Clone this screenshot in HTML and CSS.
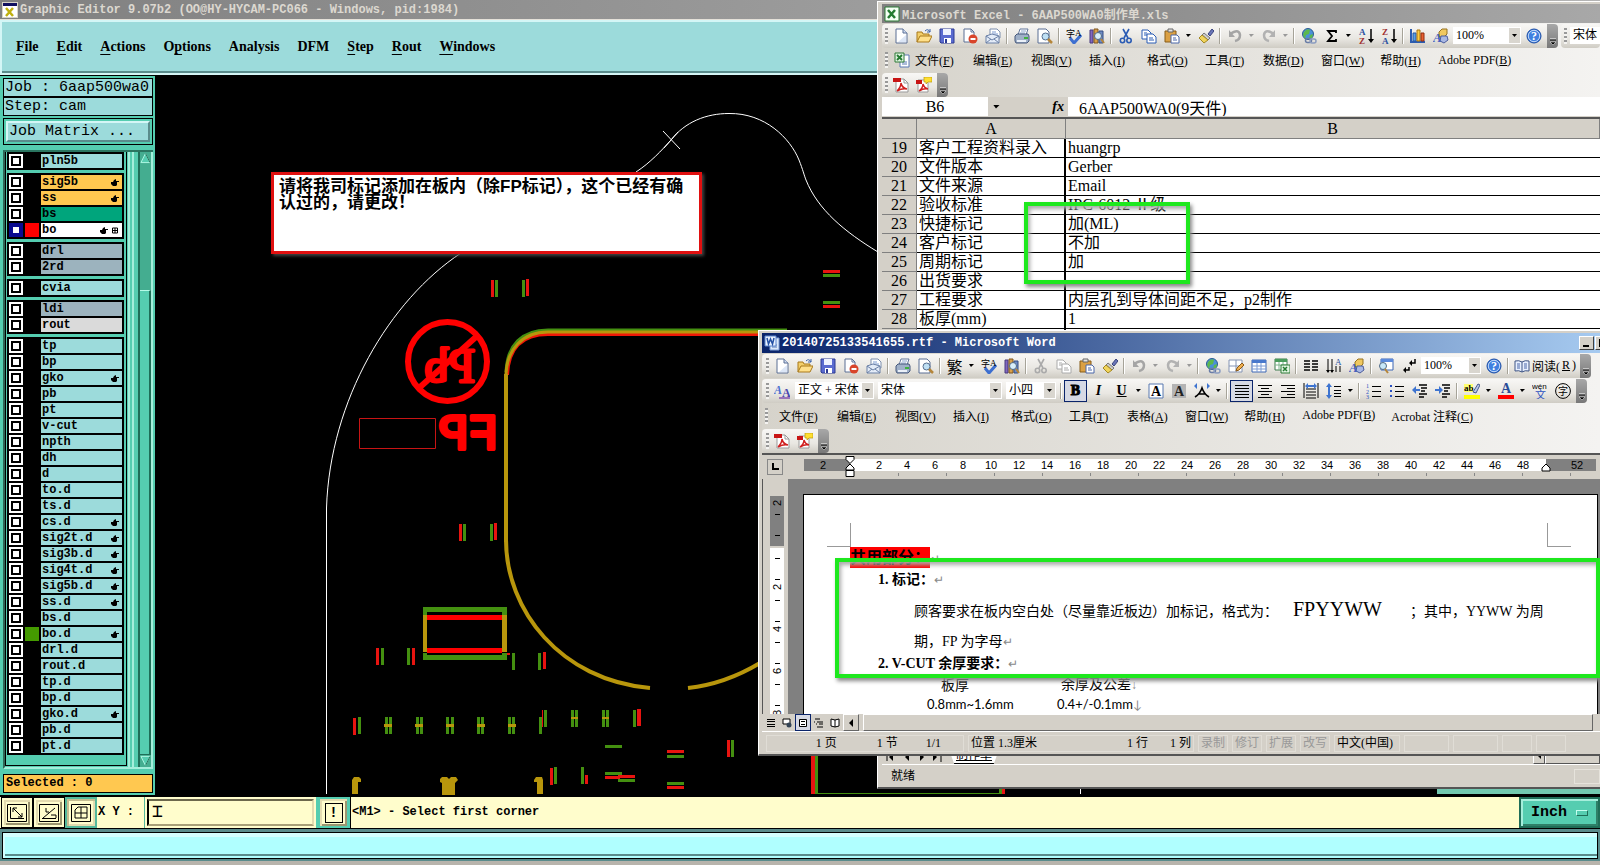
FILE: index.html
```
<!DOCTYPE html>
<html lang="zh-CN">
<head>
    <meta charset="utf-8">
    <title>Graphic Editor</title>
    <link rel="stylesheet" href="styles.css">
</head>
<body>
    <!-- icon sheet -->
    <svg class="sheet" aria-hidden="true">
        <symbol id="new" viewBox="0 0 16 16"><path d="M3 1h7l4 4v10H3z" fill="#fff" stroke="#5a6f94"/><path d="M10 1v4h4" fill="#cfdcf2" stroke="#5a6f94"/><path d="M5 14l8-7v7z" fill="#dce6f6"/></symbol>
        <symbol id="open" viewBox="0 0 16 16"><path d="M1 14V4h5l1 2h6v3" fill="#f3cf6a" stroke="#a8791b"/><path d="M1 14L4 8h12l-3 6z" fill="#ffe08a" stroke="#a8791b"/><path d="M9 3q3-3 5 1m0-3v3h-3" fill="none" stroke="#3b62a8"/></symbol>
        <symbol id="save" viewBox="0 0 16 16"><path d="M1 1h14v14H2l-1-1z" fill="#5a6bd0" stroke="#2c3a92"/><path d="M4 1h8v6H4z" fill="#eef2ff"/><path d="M5 10h7v5H5z" fill="#fff"/><path d="M6 11h2v4H6z" fill="#2c3a92"/></symbol>
        <symbol id="perm" viewBox="0 0 16 16"><path d="M2 1h7l3 3v10H2z" fill="#fff" stroke="#5a6f94"/><path d="M9 1v3h3" fill="none" stroke="#5a6f94"/><circle cx="11" cy="11" r="4.500" fill="#d8442a"/><path d="M8.500 11h5" stroke="#fff" stroke-width="2"/></symbol>
        <symbol id="mail" viewBox="0 0 16 16"><path d="M5 1h7l3 3v6H5z" fill="#fff" stroke="#7d8fae"/><path d="M7 4h4M7 6h6" stroke="#7d9bd0"/><path d="M1 8l6-2 7 2v7H1z" fill="#e4ecf8" stroke="#6a80a6"/><path d="M1 8l6 4 7-4M1 15l5-4m8 4l-5-4" fill="none" stroke="#6a80a6"/></symbol>
        <symbol id="print" viewBox="0 0 16 16"><path d="M4 7l2-6h8l-2 6z" fill="#fff" stroke="#64789c"/><path d="M7 3h5M6 5h5" stroke="#8aa3cc"/><path d="M1 8l2-2h11l1 2v5l-2 2H2l-1-2z" fill="#9fb0c8" stroke="#44577a"/><path d="M3 12h9v2H3z" fill="#eaf0f8"/><path d="M10 9h4v2h-4z" fill="#3fb23f"/></symbol>
        <symbol id="preview" viewBox="0 0 16 16"><path d="M1 1h8l3 3v11H1z" fill="#fff" stroke="#5a6f94"/><circle cx="8.500" cy="8.500" r="3.500" fill="#bfe0f4" stroke="#587090"/><path d="M11 11l4 4" stroke="#b5863a" stroke-width="2.500"/></symbol>
        <symbol id="check" viewBox="0 0 16 16"><path d="M4 10l4 5 7-8" fill="none" stroke="#3d6fd0" stroke-width="3"/><text x="0" y="9" font-size="9">字</text><text x="9" y="8" font-size="9">A</text></symbol>
        <symbol id="research" viewBox="0 0 16 16"><path d="M1 2h3v13H1z" fill="#8268c0" stroke="#46387c"/><path d="M5 1h4v14H5z" fill="#d9a04a" stroke="#7c5520"/><path d="M10 3h4v12h-4z" fill="#6d8cc8" stroke="#344c80"/><circle cx="9" cy="8" r="3.500" fill="#d8eefa" stroke="#506884"/><path d="M12 11l3 4" stroke="#b5863a" stroke-width="2"/></symbol>
        <symbol id="cut" viewBox="0 0 16 16"><path d="M5 1l5 9M11 1L6 10" stroke="currentColor" stroke-width="1.600"/><circle cx="4.500" cy="12.500" r="2.200" fill="none" stroke="currentColor" stroke-width="1.600"/><circle cx="11" cy="12.500" r="2.200" fill="none" stroke="currentColor" stroke-width="1.600"/></symbol>
        <symbol id="copy" viewBox="0 0 16 16"><path d="M1 2h6l3 3v6H1z" fill="#fff" stroke="currentColor"/><path d="M6 6h6l3 3v6H6z" fill="#fff" stroke="currentColor"/><path d="M3 5h3M3 7h3m2 3h4m-4 2h5" stroke="currentColor"/></symbol>
        <symbol id="paste" viewBox="0 0 16 16"><path d="M1 3h11v11H1z" fill="#dba043" stroke="#875c18"/><path d="M4 1h5v3H4z" fill="#e4e4e4" stroke="#666"/><path d="M7 7h6l2 2v6H7z" fill="#fff" stroke="#4a66a8"/><path d="M9 10h3m-3 2h4" stroke="#4a66a8"/></symbol>
        <symbol id="brush" viewBox="0 0 16 16"><path d="M10 6l4-5 2 2-4 5z" fill="#6a76b8" stroke="#3b457e"/><path d="M6 5l6 5-2 2-6-5z" fill="#ccc" stroke="#777"/><path d="M4 7l6 5-4 3-5-5z" fill="#f0d45c" stroke="#a38722"/></symbol>
        <symbol id="undo" viewBox="0 0 16 16"><path d="M3 6q9-6 10 1 0 5-5 6" fill="none" stroke="#a5a5a5" stroke-width="2.500"/><path d="M2 2v7h6z" fill="#a5a5a5"/></symbol>
        <symbol id="redo" viewBox="0 0 16 16"><path d="M13 6Q4 0 3 7q0 5 5 6" fill="none" stroke="#b2b2b2" stroke-width="2.500"/><path d="M14 2v7H8z" fill="#b2b2b2"/></symbol>
        <symbol id="globe" viewBox="0 0 16 16"><circle cx="7" cy="6" r="5.500" fill="#4a90d8" stroke="#2a5a94"/><path d="M3 4q3-4 6-2l-1 4-3 1-1 4-2-4zM9 7l3-1-1 4-3 1z" fill="#5cb84c"/><rect x="4.500" y="10.500" width="6" height="4" rx="2" fill="none" stroke="#6a7da6" stroke-width="1.500"/><rect x="9" y="11" width="6" height="4" rx="2" fill="none" stroke="#8a9cc0" stroke-width="1.500"/></symbol>
        <symbol id="sigma" viewBox="0 0 16 16"><path d="M12 5V3H4l4 5-4 5h8v-2" fill="none" stroke="#000" stroke-width="1.800"/></symbol>
        <symbol id="sorta" viewBox="0 0 16 16"><text x="1" y="7" font-size="9" font-weight="bold" fill="#2a50a0">A</text><text x="1" y="16" font-size="9" font-weight="bold" fill="#a03030">Z</text><path d="M13 1v12" stroke="#000" stroke-width="1.500"/><path d="M10 11h6l-3 4z"/></symbol>
        <symbol id="sortz" viewBox="0 0 16 16"><text x="1" y="7" font-size="9" font-weight="bold" fill="#a03030">Z</text><text x="1" y="16" font-size="9" font-weight="bold" fill="#2a50a0">A</text><path d="M13 1v12" stroke="#000" stroke-width="1.500"/><path d="M10 11h6l-3 4z"/></symbol>
        <symbol id="chart" viewBox="0 0 16 16"><path d="M1 1v13h14" fill="none" stroke="#2c5cb0" stroke-width="2"/><path d="M3 5h3v8H3z" fill="#59a0e8" stroke="#2858a0"/><path d="M7 2h3v11H7z" fill="#ffcc40" stroke="#a87410"/><path d="M11 5h3v8h-3z" fill="#e86030" stroke="#902c10"/></symbol>
        <symbol id="draw" viewBox="0 0 16 16"><path d="M6 4l3-3h5v5l-3 3H6z" fill="#f0c860" stroke="#967220"/><path d="M8 8h6l1 4-4 3-4-2z" fill="#a9b8e4" stroke="#4b5c9c"/><text x="0" y="14" font-size="13" font-weight="bold" font-style="italic" fill="#4660c0">A</text></symbol>
        <symbol id="help" viewBox="0 0 16 16"><circle cx="8" cy="8" r="7" fill="#3f80e0" stroke="#1c4ca4"/><circle cx="8" cy="8" r="5.700" fill="none" stroke="#fff" stroke-width=".7"/><text x="5" y="12" font-size="12" font-weight="bold" fill="#fff">?</text></symbol>
        <symbol id="xls" viewBox="0 0 16 16"><path d="M1 1h14v14H1z" fill="#f4fff4" stroke="#2c7a36"/><path d="M4 4l7 8M11 4l-7 8" stroke="#237a30" stroke-width="2.500"/></symbol>
        <symbol id="xldoc" viewBox="0 0 16 16"><path d="M6 3h9v12H6z" fill="#fff" stroke="#5a78b4"/><path d="M8 12h5M8 10h5" stroke="#5a78b4"/><path d="M1 1h9v9H1z" fill="#dff3df" stroke="#2c7a36"/><path d="M3 3l5 5M8 3L3 8" stroke="#237a30" stroke-width="1.800"/></symbol>
        <symbol id="doc" viewBox="0 0 16 16"><path d="M6 3h9v12H6z" fill="#dbe8fa" stroke="#7f9dd4"/><path d="M8 12h5M8 10h5" stroke="#5a78b4"/><path d="M1 1h11v10H1z" fill="#e9f1ff" stroke="#5a84cc"/><path d="M3 3l1.500 6L6.500 4l2 5L10 3" fill="none" stroke="#2450a4" stroke-width="1.500"/></symbol>
        <symbol id="pdf" viewBox="0 0 16 16"><path d="M3 2h8l4 4v9H3z" fill="#fff" stroke="#999"/><path d="M11 2v4h4" fill="none" stroke="#999"/><path d="M0 1h8v4H0z" fill="#c81414"/><path d="M4 14q4-4 4-8 1 5 6 6-5-1-10 2" fill="none" stroke="#d02020" stroke-width="1.500"/></symbol>
        <symbol id="pdfnote" viewBox="0 0 16 16"><path d="M2 3h8l2 3v9H2z" fill="#fff" stroke="#999"/><path d="M0 3h6v4H0z" fill="#c81414"/><path d="M3 14q4-3 4-7 1 4 5 5-4-1-9 2" fill="none" stroke="#d02020" stroke-width="1.500"/><path d="M8 0h8v5h-4l-2 2V5H8z" fill="#ffdf30" stroke="#b89810" stroke-width=".7"/></symbol>
        <symbol id="tables" viewBox="0 0 16 16"><path d="M1 2h13v12H1zM1 8h13M8 2v12" fill="#fff" stroke="#8494b4"/><path d="M8 13l1-3 5-5 2 2-5 5z" fill="#f0b050" stroke="#8a5a18"/></symbol>
        <symbol id="grid" viewBox="0 0 16 16"><path d="M1 2h14v12H1z" fill="#fff" stroke="#3c66b4"/><path d="M1 2h14v3H1z" fill="#4878cc"/><path d="M1 8h14M1 11h14M6 5v9M10 5v9" stroke="#7c9cd4"/></symbol>
        <symbol id="gridx" viewBox="0 0 16 16"><path d="M1 1h12v11H1z" fill="#fff" stroke="#3c7a4c"/><path d="M1 1h12v3H1z" fill="#4a9c5c"/><path d="M1 7h12M5 4v8M9 4v8" stroke="#7cb48c"/><path d="M7 7h9v8H7z" fill="#e2f5e2" stroke="#2c7a36"/><path d="M9 9l4 4m0-4l-4 4" stroke="#237a30" stroke-width="1.500"/></symbol>
        <symbol id="cols" viewBox="0 0 16 16"><path d="M1 3h6M1 6h6M1 9h6M1 12h6M9 3h6M9 6h6M9 9h6M9 12h6" stroke="#000" stroke-width="1.500"/></symbol>
        <symbol id="textdir" viewBox="0 0 16 16"><path d="M2 1v13M6 1v13M10 8v6M14 8v6" stroke="#000"/><path d="M0 12h4l-2 3zM4 12h4l-2 3z"/><text x="9" y="7" font-size="9" fill="#2a50a0">A</text></symbol>
        <symbol id="docmap" viewBox="0 0 16 16"><path d="M3 1h12v11H3z" fill="#fff" stroke="#3c66b4"/><path d="M3 1h12v3H3z" fill="#5b8adc"/><circle cx="5" cy="8" r="3.500" fill="#c8e8f8" stroke="#506884"/><path d="M7 11l3 4" stroke="#b5863a" stroke-width="2"/></symbol>
        <symbol id="para" viewBox="0 0 16 16"><path d="M14 1v4h-4M8 9v3H4" fill="none" stroke="#000" stroke-width="1.500"/><path d="M11 2v6L8 5zM5 9v6l-3-3z"/></symbol>
        <symbol id="book" viewBox="0 0 16 16"><path d="M8 4Q5 2 1 3v10q4-1 7 1 3-2 7-1V3q-4-1-7 1v10" fill="#e8f0ff" stroke="#3e5484"/><path d="M3 6h3M3 8h3M3 10h3m4-4h3m-3 2h3m-3 2h3" stroke="#4a66a8"/></symbol>
        <symbol id="styles" viewBox="0 0 16 16"><text x="0" y="11" font-size="12" font-weight="bold" font-style="italic" fill="#4a70d0">A</text><text x="8" y="14" font-size="12" font-weight="bold" fill="#4a48b0">A</text><path d="M5 15h11" stroke="#8050b0" stroke-width="1.500"/></symbol>
        <symbol id="just" viewBox="0 0 16 16"><path d="M1 2.500h14M1 5.500h14M1 8.500h14M1 11.500h14M1 14.500h14" stroke="#000"/></symbol>
        <symbol id="center" viewBox="0 0 16 16"><path d="M1 2.500h14M4 5.500h8M1 8.500h14M4 11.500h8M1 14.500h14" stroke="#000"/></symbol>
        <symbol id="right" viewBox="0 0 16 16"><path d="M1 2.500h14M7 5.500h8M1 8.500h14M7 11.500h8M1 14.500h14" stroke="#000"/></symbol>
        <symbol id="dist" viewBox="0 0 16 16"><path d="M1 0v15M15 0v15M3 6h10M3 9h10M3 12h10M3 15h10" stroke="#000"/><path d="M2 3l3-3v2h6V0l3 3-3 3V4H5v2z" fill="#3e74d0"/></symbol>
        <symbol id="spacing" viewBox="0 0 16 16"><path d="M8 3.500h7M8 7.500h7M8 10.500h7M8 13.500h7" stroke="#000"/><path d="M3 0l3 4H4v8h2l-3 4-3-4h2V4H0z" fill="#3e74d0"/></symbol>
        <symbol id="nums" viewBox="0 0 16 16"><text x="0" y="5" font-size="6" fill="#2a50c0">1</text><text x="0" y="11" font-size="6" fill="#2a50c0">2</text><text x="0" y="16" font-size="6" fill="#2a50c0">3</text><path d="M6 3.500h9M6 8.500h9M6 13.500h9" stroke="#000"/></symbol>
        <symbol id="bullets" viewBox="0 0 16 16"><path d="M1 2h2v2H1zM1 7h2v2H1zM1 12h2v2H1z" fill="#2a50c0"/><path d="M6 3.500h9M6 8.500h9M6 13.500h9" stroke="#000"/></symbol>
        <symbol id="outdent" viewBox="0 0 16 16"><path d="M7 2h8M9 5h6M9 8h4M7 11h8M7 14h5" stroke="#000" stroke-width="1.600"/><path d="M0 7l4-4v3h4v2H4v3z" fill="#3e74d0"/></symbol>
        <symbol id="indent" viewBox="0 0 16 16"><path d="M7 2h8M9 5h6M9 8h4M7 11h8M7 14h5" stroke="#000" stroke-width="1.600"/><path d="M8 7L4 3v3H0v2h4v3z" fill="#3e74d0"/></symbol>
        <symbol id="hilite" viewBox="0 0 16 16"><path d="M0 1h9v8H0z" fill="#ffff70"/><text x="0" y="8" font-size="9" font-weight="bold">ab</text><path d="M9 9l5-8 2 1-4 8z" fill="#b9c8ea" stroke="#46588c"/><path d="M0 12h16v4H0z" fill="#ff0"/></symbol>
        <symbol id="fcolor" viewBox="0 0 16 16"><text x="3" y="10" font-size="14" font-weight="bold" fill="#2a4c98">A</text><path d="M0 12h16v4H0z" fill="#f00"/></symbol>
        <symbol id="wen" viewBox="0 0 16 16"><text x="0" y="6" font-size="8" class="sans">wén</text><text x="3" y="16" font-size="11" fill="#2a50c0">文</text></symbol>
        <symbol id="zi" viewBox="0 0 16 16"><circle cx="8" cy="8" r="7.400" fill="none" stroke="#000"/><text x="3" y="12" font-size="10">字</text></symbol>
        <symbol id="abox" viewBox="0 0 16 16"><path d="M1 1h14v14H1z" fill="#fff" stroke="#5878b0"/><text x="3" y="13" font-size="14" font-weight="bold">A</text></symbol>
        <symbol id="ashade" viewBox="0 0 16 16"><path d="M1 1h14v14H1z" fill="#b4b4b4"/><text x="3" y="13" font-size="14" font-weight="bold" fill="#222">A</text></symbol>
        <symbol id="ascale" viewBox="0 0 16 16"><path d="M1 14Q6 11 8 5q2 6 7 9M4 11h8" fill="none" stroke="#000" stroke-width="1.600"/><path d="M0 3l3-3v6zM16 3l-3-3v6z" fill="#3e74d0"/></symbol>
        <symbol id="hand" viewBox="0 0 8 7"><path d="M3 1L5 0v2h3v1H6v3L5 7H2L0 5V3h2z"/></symbol>
        <symbol id="more" viewBox="0 0 8 8"><path d="M1 1h6" stroke="#fff"/><path d="M1 2h6" stroke="#000"/><path d="M1 4h6L4 7z" fill="#000" stroke="#fff" stroke-width=".5"/></symbol>
    </svg>

    <header class="ge-title">
        <svg viewBox="0 0 16 16"><path d="M0 0h16v16H0z" fill="#d8d4c8"/><path d="M1 2h14v13H1z" fill="#fff"/><path d="M1 1h14v3H1z" fill="#101060"/><path d="M4 6l7 8M11 6l-7 8" stroke="#c0b010" stroke-width="2.500"/></svg>
        Graphic Editor 9.07b2 (OO@HY-HYCAM-PC066 - Windows, pid:1984)
    </header>
    <nav class="ge-menu">
        <button><u>F</u>ile</button>
        <button><u>E</u>dit</button>
        <button><u>A</u>ctions</button>
        <button>O<u>p</u>tions</button>
        <button>Analysis</button>
        <button>DFM</button>
        <button><u>S</u>tep</button>
        <button><u>R</u>out</button>
        <button><u>W</u>indows</button>
    </nav>

    <main class="ge-main">
        <aside class="side">
            <div class="info">Job : 6aap500wa0</div>
            <div class="info">Step: cam</div>
            <div class="matrix"><button>Job Matrix ...</button></div>
            <div class="lists">
                <div class="layers">
                    <div class="group">
                        <label class="layer"><input type="checkbox"><i></i><b>pln5b</b></label>
                    </div>
                    <div class="group">
                        <label class="layer"><input type="checkbox"><i></i><b class="signal">sig5b<svg><use href="#hand"/></svg></b></label>
                        <label class="layer"><input type="checkbox"><i></i><b class="signal">ss<svg><use href="#hand"/></svg></b></label>
                        <label class="layer"><input type="checkbox"><i></i><b class="mask">bs</b></label>
                        <label class="layer"><input type="checkbox" class="work"><i class="red"></i><b class="active">bo<svg><use href="#hand"/></svg><svg viewBox="0 0 7 7"><path d="M1 1h5v5H1zM1 3.500h5M3.500 1v5" fill="none" stroke="#000"/></svg></b></label>
                    </div>
                    <div class="group">
                        <label class="layer"><input type="checkbox"><i></i><b class="drill">drl</b></label>
                        <label class="layer"><input type="checkbox"><i></i><b class="drill">2rd</b></label>
                    </div>
                    <div class="group">
                        <label class="layer"><input type="checkbox"><i></i><b>cvia</b></label>
                    </div>
                    <div class="group">
                        <label class="layer"><input type="checkbox"><i></i><b class="drill">ldi</b></label>
                        <label class="layer"><input type="checkbox"><i></i><b class="rout">rout</b></label>
                    </div>
                    <div class="group">
                        <label class="layer"><input type="checkbox"><i></i><b>tp</b></label>
                        <label class="layer"><input type="checkbox"><i></i><b>bp</b></label>
                        <label class="layer"><input type="checkbox"><i></i><b>gko<svg><use href="#hand"/></svg></b></label>
                        <label class="layer"><input type="checkbox"><i></i><b>pb</b></label>
                        <label class="layer"><input type="checkbox"><i></i><b>pt</b></label>
                        <label class="layer"><input type="checkbox"><i></i><b>v-cut</b></label>
                        <label class="layer"><input type="checkbox"><i></i><b>npth</b></label>
                        <label class="layer"><input type="checkbox"><i></i><b>dh</b></label>
                        <label class="layer"><input type="checkbox"><i></i><b>d</b></label>
                        <label class="layer"><input type="checkbox"><i></i><b>to.d</b></label>
                        <label class="layer"><input type="checkbox"><i></i><b>ts.d</b></label>
                        <label class="layer"><input type="checkbox"><i></i><b>cs.d<svg><use href="#hand"/></svg></b></label>
                        <label class="layer"><input type="checkbox"><i></i><b>sig2t.d<svg><use href="#hand"/></svg></b></label>
                        <label class="layer"><input type="checkbox"><i></i><b>sig3b.d<svg><use href="#hand"/></svg></b></label>
                        <label class="layer"><input type="checkbox"><i></i><b>sig4t.d<svg><use href="#hand"/></svg></b></label>
                        <label class="layer"><input type="checkbox"><i></i><b>sig5b.d<svg><use href="#hand"/></svg></b></label>
                        <label class="layer"><input type="checkbox"><i></i><b>ss.d<svg><use href="#hand"/></svg></b></label>
                        <label class="layer"><input type="checkbox"><i></i><b>bs.d</b></label>
                        <label class="layer"><input type="checkbox"><i class="green"></i><b>bo.d<svg><use href="#hand"/></svg></b></label>
                        <label class="layer"><input type="checkbox"><i></i><b>drl.d</b></label>
                        <label class="layer"><input type="checkbox"><i></i><b>rout.d</b></label>
                        <label class="layer"><input type="checkbox"><i></i><b>tp.d</b></label>
                        <label class="layer"><input type="checkbox"><i></i><b>bp.d</b></label>
                        <label class="layer"><input type="checkbox"><i></i><b>gko.d<svg><use href="#hand"/></svg></b></label>
                        <label class="layer"><input type="checkbox"><i></i><b>pb.d</b></label>
                        <label class="layer"><input type="checkbox"><i></i><b>pt.d</b></label>
                    </div>
                </div>
                <div class="bevel"></div>
                <div class="vbar">
                    <button aria-label="Scroll up"><svg viewBox="0 0 12 12"><path d="M6 1l5 10H1z" fill="#55cdb0" stroke="#b5fbe8"/><path d="M6 1l5 10" stroke="#1c6650"/></svg></button>
                    <div class="thumb"></div>
                    <button aria-label="Scroll down"><svg viewBox="0 0 12 12"><path d="M1 1h10L6 11z" fill="#55cdb0" stroke="#b5fbe8"/><path d="M11 1L6 11" stroke="#1c6650"/></svg></button>
                </div>
            </div>
            <div class="selected">Selected : 0</div>
        </aside>

        <section class="board">
            <svg class="art" viewBox="155 75 1445 720">
                <g fill="none" stroke="#fff">
                    <path d="M326.500 794V508C330 400 390 300 461 253M636 172C650 163 662 150 671 140C685 122 706 113.500 729 113.500C765 113 790 138 799 160C803 170 804 175 806 180C818 210 845 232 878 252M663 131l17 18M664 148l14-16M1080.500 789v5"/>
                </g>
                <!-- slot outline -->
                <g fill="none" stroke-width="4">
                    <path d="M507 375C508 348 522 334 548 334H760" stroke="#f01808"/>
                    <path d="M506 372C507 345 522 330 548 330H787" stroke="#449010" stroke-width="3"/>
                    <path d="M506 542V374C507 350 522 332 548 332H758" stroke="#b8960c" stroke-width="3"/>
                    <path d="M506 540C506 610 560 680 650 688M688 688Q725 684 760 663M506 374v168" stroke="#b8960c"/>
                </g>
                <g fill="none" stroke="#f00">
                    <circle cx="447.500" cy="361.500" r="39.500" stroke-width="6"/>
                    <path d="M419 388l58-52" stroke-width="6"/>
                    <path d="M359.500 418.500h76v30h-76z" stroke="#c81414"/>
                </g>
                <text class="pb" transform="translate(475 382) scale(-1 1)">Pb</text>
                <text class="fp" transform="translate(498 449) scale(-1 1)">FP</text>
                <!-- component -->
                <path d="M423 607h84v8h-84zM423 653h84v7h-84z" fill="#449010"/>
                <path d="M427 612h75v43h-75z" fill="#000"/>
                <path d="M427 615h75v5h-75zM427 648h75v5h-75z" fill="#f00"/>
                <path d="M423 615h4v37h-4zM502 615h5v37h-5z" fill="#b8960c"/>
                <!-- pads -->
                <path fill="#e81410" d="M491 280h3v17h-3zM526 279h3v17h-3zM823 270h17v3h-17zM823 305h17v3h-17zM459 524h3v17h-3zM494 523h3v17h-3zM376 648h3v17h-3zM412 648h3v17h-3zM507 653h3v2h-3zM543 652h3v17h-3zM353 718h3v17h-3zM542 710h1v17h-1zM637 709h4v17h-4zM667 750h17v3h-17zM667 786h17v3h-17zM727 740h3v17h-3zM550 768h3v17h-3zM585 775h3v9h-3zM605 776h15v3h-15zM618 775h17v3h-17zM811 754h4v40h-4zM1002 788h3v6h-3z"/>
                <path fill="#449010" d="M495 280h3v17h-3zM522 280h3v17h-3zM823 274h17v3h-17zM823 301h17v3h-17zM463 524h3v17h-3zM490 524h3v17h-3zM381 648h3v17h-3zM407 648h3v17h-3zM512 653h3v17h-3zM538 653h3v17h-3zM358 717h3v17h-3zM385 717h3v17h-3zM389 717h3v17h-3zM416 717h3v17h-3zM420 717h3v17h-3zM446 717h3v17h-3zM451 717h3v17h-3zM477 717h3v17h-3zM481 717h3v17h-3zM508 717h3v17h-3zM512 717h3v17h-3zM539 717h3v17h-3zM544 710h3v17h-3zM571 710h3v17h-3zM575 710h3v17h-3zM602 710h3v17h-3zM606 710h3v17h-3zM633 710h3v17h-3zM605 745h17v3h-17zM667 755h17v3h-17zM667 782h17v3h-17zM731 740h3v17h-3zM554 767h3v17h-3zM581 767h3v17h-3zM605 772h17v3h-17zM618 779h17v3h-17zM815 754h3v40h-3zM818 793h181v1h-181zM999 788h3v6h-3z"/>
                <path fill="#b8960c" d="M384 724h8v3h-8zM415 724h8v3h-8zM446 724h8v3h-8zM477 724h8v3h-8zM508 724h8v3h-8zM571 717h7v2h-7zM602 717h7v2h-7zM352 780l2-3h5l2 2v3h-3v12h-6zM440 779l2-2h5l2 2 2-2h5l2 3-3 3v12h-13v-12l-2-1zM534 780l2-3h6l1 3v14h-6v-12h-3z"/>
                <path fill="#72c8b0" d="M1437 789h163v5h-163z"/>
            </svg>
        </section>
    </main>

    <footer class="ge-foot">
        <button class="tool" aria-label="Zoom"><svg viewBox="0 0 20 18"><path d="M.5.5h19v17H.5zM3.500 3v11.500H17M6 4l9 9M6 8V4h4M15 9v4h-4" fill="none" stroke="#000"/></svg></button>
        <button class="tool" aria-label="Angle"><svg viewBox="0 0 20 18"><path d="M.5.5h19v17H.5zM3 14.500h14M4 14L16 4M7 4v4h3M12 11h5v3" fill="none" stroke="#000"/></svg></button>
        <button class="tool on" aria-label="Grid"><svg viewBox="0 0 20 18"><path d="M.5.5h19v17H.5zM4 14V6l3-3h9v11zM10 3v11M4 9h12" fill="none" stroke="#000"/></svg></button>
        <label for="xy">X Y :</label>
        <div class="xy"><input id="xy" type="text" value="&#x2336;"></div>
        <button class="tool bang" aria-label="Interrupt"><span>!</span></button>
        <div class="prompt">&lt;M1&gt; - Select first corner</div>
        <button class="units">Inch<i></i></button>
    </footer>
    <div class="ge-cmd"><div></div></div>

    <div class="note">请将我司标记添加在板内（除FP标记），这个已经有确认过的，请更改！</div>

    <!-- Excel -->
    <section class="win excel">
        <header class="title"><svg><use href="#xls"/></svg>Microsoft Excel - 6AAP500WA0制作单.xls</header>
        <div class="row">
            <div class="bar">
                <i class="grip"></i>
                <button class="tb" aria-label="New"><svg><use href="#new"/></svg></button>
                <button class="tb" aria-label="Open"><svg><use href="#open"/></svg></button>
                <button class="tb" aria-label="Save"><svg><use href="#save"/></svg></button>
                <button class="tb" aria-label="Permission"><svg><use href="#perm"/></svg></button>
                <button class="tb" aria-label="Mail"><svg><use href="#mail"/></svg></button>
                <i class="sep"></i>
                <button class="tb" aria-label="Print"><svg><use href="#print"/></svg></button>
                <button class="tb" aria-label="Preview"><svg><use href="#preview"/></svg></button>
                <i class="sep"></i>
                <button class="tb" aria-label="Spelling"><svg><use href="#check"/></svg></button>
                <button class="tb" aria-label="Research"><svg><use href="#research"/></svg></button>
                <i class="sep"></i>
                <button class="tb blue" aria-label="Cut"><svg><use href="#cut"/></svg></button>
                <button class="tb blue" aria-label="Copy"><svg><use href="#copy"/></svg></button>
                <button class="tb" aria-label="Paste"><svg><use href="#paste"/></svg></button>
                <i class="arr"></i>
                <button class="tb" aria-label="Format painter"><svg><use href="#brush"/></svg></button>
                <i class="sep"></i>
                <button class="tb" aria-label="Undo"><svg><use href="#undo"/></svg></button>
                <i class="arr off"></i>
                <button class="tb" aria-label="Redo"><svg><use href="#redo"/></svg></button>
                <i class="arr off"></i>
                <i class="sep"></i>
                <button class="tb" aria-label="Hyperlink"><svg><use href="#globe"/></svg></button>
                <button class="tb" aria-label="Sum"><svg><use href="#sigma"/></svg></button>
                <i class="arr"></i>
                <button class="tb" aria-label="Sort ascending"><svg><use href="#sorta"/></svg></button>
                <button class="tb" aria-label="Sort descending"><svg><use href="#sortz"/></svg></button>
                <i class="sep"></i>
                <button class="tb" aria-label="Chart"><svg><use href="#chart"/></svg></button>
                <button class="tb" aria-label="Drawing"><svg><use href="#draw"/></svg></button>
                <select class="zoom" aria-label="Zoom"><option>100%</option></select>
                <button class="tb" aria-label="Help"><svg><use href="#help"/></svg></button>
                <button class="more" aria-label="More"><svg><use href="#more"/></svg></button>
            </div>
            <div class="bar rest">
                <i class="grip"></i>
                <select class="face" aria-label="Font"><option>宋体</option></select>
            </div>
        </div>
        <nav class="menu">
            <i class="grip"></i>
            <svg class="icon"><use href="#xldoc"/></svg>
            <button>文件(<u>F</u>)</button>
            <button>编辑(<u>E</u>)</button>
            <button>视图(<u>V</u>)</button>
            <button>插入(<u>I</u>)</button>
            <button>格式(<u>O</u>)</button>
            <button>工具(<u>T</u>)</button>
            <button>数据(<u>D</u>)</button>
            <button>窗口(<u>W</u>)</button>
            <button>帮助(<u>H</u>)</button>
            <button>Adobe PDF(<u>B</u>)</button>
        </nav>
        <div class="row">
            <div class="bar">
                <i class="grip"></i>
                <button class="tb" aria-label="Convert to PDF"><svg><use href="#pdf"/></svg></button>
                <button class="tb" aria-label="PDF and comment"><svg><use href="#pdfnote"/></svg></button>
                <button class="more" aria-label="More"><svg><use href="#more"/></svg></button>
            </div>
        </div>
        <div class="formula">
            <input class="namebox" type="text" value="B6" aria-label="Name box">
            <i class="arr"></i>
            <em>fx</em>
            <input class="fx" type="text" value="6AAP500WA0(9天件)" aria-label="Formula">
        </div>
        <div class="cells">
            <table>
                <thead><tr><th></th><th>A</th><th>B</th></tr></thead>
                <tbody>
                    <tr><th>19</th><td>客户工程资料录入</td><td>huangrp</td></tr>
                    <tr><th>20</th><td>文件版本</td><td>Gerber</td></tr>
                    <tr><th>21</th><td>文件来源</td><td>Email</td></tr>
                    <tr><th>22</th><td>验收标准</td><td>IPC-6012 Ⅱ级</td></tr>
                    <tr><th>23</th><td>快捷标记</td><td>加(ML)</td></tr>
                    <tr><th>24</th><td>客户标记</td><td>不加</td></tr>
                    <tr><th>25</th><td>周期标记</td><td>加</td></tr>
                    <tr><th>26</th><td>出货要求</td><td></td></tr>
                    <tr><th>27</th><td>工程要求</td><td>内层孔到导体间距不足，p2制作</td></tr>
                    <tr><th>28</th><td>板厚(mm)</td><td>1</td></tr>
                    <tr><th></th><td></td><td></td></tr>
                </tbody>
            </table>
        </div>
        <div class="tabs">
            <svg viewBox="0 0 60 10"><path d="M3 1v8M25 1v0M57 0v10" stroke="#000"/><path d="M9 1v8L5 5zM25 1v8l-4-4zM36 1v8l4-4zM49 1v8l4-4z"/></svg>
            <a href="#sheet">制作单</a>
            <div class="tabscroll"><button aria-label="Scroll left"><svg viewBox="0 0 8 8"><path d="M6 0v8L2 4z"/></svg></button><i></i></div>
        </div>
        <footer class="ready"><span>就绪</span><i></i></footer>
    </section>
    <div class="mark mark-cells"></div>

    <!-- Word -->
    <section class="win word">
        <header class="title">
            <svg><use href="#doc"/></svg>20140725133541655.rtf - Microsoft Word
            <span class="wbtns"><button aria-label="Minimize"><i class="min"></i></button><button aria-label="Maximize"><i class="max"></i></button></span>
        </header>
        <div class="row">
            <div class="bar">
                <i class="grip"></i>
                <button class="tb" aria-label="New"><svg><use href="#new"/></svg></button>
                <button class="tb" aria-label="Open"><svg><use href="#open"/></svg></button>
                <button class="tb" aria-label="Save"><svg><use href="#save"/></svg></button>
                <button class="tb" aria-label="Permission"><svg><use href="#perm"/></svg></button>
                <button class="tb" aria-label="Mail"><svg><use href="#mail"/></svg></button>
                <i class="sep"></i>
                <button class="tb" aria-label="Print"><svg><use href="#print"/></svg></button>
                <button class="tb" aria-label="Preview"><svg><use href="#preview"/></svg></button>
                <i class="sep"></i>
                <button class="tb big">繁</button>
                <i class="arr"></i>
                <button class="tb" aria-label="Spelling"><svg><use href="#check"/></svg></button>
                <button class="tb" aria-label="Research"><svg><use href="#research"/></svg></button>
                <i class="sep"></i>
                <button class="tb gray" aria-label="Cut"><svg><use href="#cut"/></svg></button>
                <button class="tb gray" aria-label="Copy"><svg><use href="#copy"/></svg></button>
                <button class="tb" aria-label="Paste"><svg><use href="#paste"/></svg></button>
                <button class="tb" aria-label="Format painter"><svg><use href="#brush"/></svg></button>
                <i class="sep"></i>
                <button class="tb" aria-label="Undo"><svg><use href="#undo"/></svg></button>
                <i class="arr off"></i>
                <button class="tb" aria-label="Redo"><svg><use href="#redo"/></svg></button>
                <i class="arr off"></i>
                <i class="sep"></i>
                <button class="tb" aria-label="Hyperlink"><svg><use href="#globe"/></svg></button>
                <button class="tb" aria-label="Tables and borders"><svg><use href="#tables"/></svg></button>
                <button class="tb" aria-label="Insert table"><svg><use href="#grid"/></svg></button>
                <button class="tb" aria-label="Insert worksheet"><svg><use href="#gridx"/></svg></button>
                <i class="sep"></i>
                <button class="tb" aria-label="Columns"><svg><use href="#cols"/></svg></button>
                <button class="tb" aria-label="Text direction"><svg><use href="#textdir"/></svg></button>
                <button class="tb" aria-label="Drawing"><svg><use href="#draw"/></svg></button>
                <i class="sep"></i>
                <button class="tb" aria-label="Document map"><svg><use href="#docmap"/></svg></button>
                <button class="tb" aria-label="Show marks"><svg><use href="#para"/></svg></button>
                <select class="zoom small" aria-label="Zoom"><option>100%</option></select>
                <button class="tb" aria-label="Help"><svg><use href="#help"/></svg></button>
                <i class="sep"></i>
                <button class="read"><svg><use href="#book"/></svg>阅读(<u>R</u>)</button>
                <button class="more" aria-label="More"><svg><use href="#more"/></svg></button>
            </div>
        </div>
        <div class="row">
            <div class="bar">
                <i class="grip"></i>
                <button class="tb" aria-label="Styles"><svg><use href="#styles"/></svg></button>
                <select class="style" aria-label="Style"><option>正文 + 宋体</option></select>
                <select class="font" aria-label="Font"><option>宋体</option></select>
                <select class="size" aria-label="Size"><option>小四</option></select>
                <i class="sep"></i>
                <button class="tb pressed fmt"><b>B</b></button>
                <button class="tb fmt"><em>I</em></button>
                <button class="tb fmt"><u>U</u></button>
                <i class="arr"></i>
                <button class="tb" aria-label="Border"><svg><use href="#abox"/></svg></button>
                <button class="tb" aria-label="Shading"><svg><use href="#ashade"/></svg></button>
                <button class="tb" aria-label="Scale"><svg><use href="#ascale"/></svg></button>
                <i class="arr"></i>
                <i class="sep"></i>
                <button class="tb pressed" aria-label="Justify"><svg><use href="#just"/></svg></button>
                <button class="tb" aria-label="Center"><svg><use href="#center"/></svg></button>
                <button class="tb" aria-label="Right"><svg><use href="#right"/></svg></button>
                <button class="tb" aria-label="Distribute"><svg><use href="#dist"/></svg></button>
                <button class="tb" aria-label="Line spacing"><svg><use href="#spacing"/></svg></button>
                <i class="arr"></i>
                <i class="sep"></i>
                <button class="tb" aria-label="Numbering"><svg><use href="#nums"/></svg></button>
                <button class="tb" aria-label="Bullets"><svg><use href="#bullets"/></svg></button>
                <button class="tb" aria-label="Outdent"><svg><use href="#outdent"/></svg></button>
                <button class="tb" aria-label="Indent"><svg><use href="#indent"/></svg></button>
                <i class="sep"></i>
                <button class="tb" aria-label="Highlight"><svg><use href="#hilite"/></svg></button>
                <i class="arr"></i>
                <button class="tb" aria-label="Font color"><svg><use href="#fcolor"/></svg></button>
                <i class="arr"></i>
                <button class="tb" aria-label="Phonetic guide"><svg><use href="#wen"/></svg></button>
                <button class="tb" aria-label="Enclose"><svg><use href="#zi"/></svg></button>
                <button class="more" aria-label="More"><svg><use href="#more"/></svg></button>
            </div>
        </div>
        <nav class="menu">
            <i class="grip"></i>
            <button>文件(<u>F</u>)</button>
            <button>编辑(<u>E</u>)</button>
            <button>视图(<u>V</u>)</button>
            <button>插入(<u>I</u>)</button>
            <button>格式(<u>O</u>)</button>
            <button>工具(<u>T</u>)</button>
            <button>表格(<u>A</u>)</button>
            <button>窗口(<u>W</u>)</button>
            <button>帮助(<u>H</u>)</button>
            <button>Adobe PDF(<u>B</u>)</button>
            <button>Acrobat 注释(<u>C</u>)</button>
        </nav>
        <div class="row">
            <div class="bar">
                <i class="grip"></i>
                <button class="tb" aria-label="Convert to PDF"><svg><use href="#pdf"/></svg></button>
                <button class="tb" aria-label="PDF and comment"><svg><use href="#pdfnote"/></svg></button>
                <button class="more" aria-label="More"><svg><use href="#more"/></svg></button>
            </div>
        </div>
        <div class="hruler">
            <button class="tabstop" aria-label="Tab stop"><svg viewBox="0 0 8 8"><path d="M2 0v6h6" fill="none" stroke="#000" stroke-width="2"/></svg></button>
            <div class="scale">
                <span class="edge">2</span>
                <div class="white">
                    <svg class="ind" viewBox="0 0 10 21"><path d="M1 .5h8v3l-4 4-4-4zM5 8l4 4v2H1v-2zM1 14.500h8v6H1z" fill="#fff" stroke="#000"/></svg>
                    <span>2</span><span>4</span><span>6</span><span>8</span><span>10</span><span>12</span><span>14</span><span>16</span><span>18</span><span>20</span><span>22</span><span>24</span><span>26</span><span>28</span><span>30</span><span>32</span><span>34</span><span>36</span><span>38</span><span>40</span><span>42</span><span>44</span><span>46</span><span>48</span>
                    <svg class="ind end" viewBox="0 0 10 21"><path d="M5 11l4 4v3H1v-3z" fill="#fff" stroke="#000"/></svg>
                </div>
                <span class="edge tail">52</span>
            </div>
        </div>
        <div class="docarea">
            <div class="vruler">
                <div class="vtop"><span>2</span></div>
                <div class="vmain"><span>2</span><span>4</span><span>6</span><span>8</span></div>
            </div>
            <article class="page">
                <div class="corners"><i></i><i></i></div>
                <h2><span>共用部分：</span><s>↵</s></h2>
                <h3>1. 标记：<s>↵</s></h3>
                <p>顾客要求在板内空白处（尽量靠近板边）加标记，格式为：<span class="code">FPYYWW</span>；其中，YYWW 为周<br>期，FP 为字母<s>↵</s></p>
                <h3 class="tight">2. V-CUT 余厚要求：<s>↵</s></h3>
                <table>
                    <tr><th>板厚</th><th>余厚及公差<s>↓</s></th></tr>
                    <tr><td>0.8mm~1.6mm</td><td>0.4+/-0.1mm<s>↓</s></td></tr>
                </table>
            </article>
        </div>
        <div class="views">
            <button aria-label="Normal"><svg viewBox="0 0 10 10"><path d="M1 1.500h8M1 3.500h8M1 6.500h8M1 8.500h8" stroke="#000"/></svg></button>
            <button aria-label="Web"><svg viewBox="0 0 10 10"><path d="M1 1h7v5H1z" fill="#fff" stroke="#000"/><circle cx="7" cy="7" r="2.500" fill="#345"/></svg></button>
            <button class="pressed" aria-label="Print layout"><svg viewBox="0 0 10 10"><path d="M1.500 1.500h7v7h-7zM3 3.500h4M3 6.500h4" fill="#fff" stroke="#000"/></svg></button>
            <button aria-label="Outline"><svg viewBox="0 0 10 10"><path d="M1 1h5M3 4h6M5 6h4M3 9h6M0 4h1M2 6h1" stroke="#000"/></svg></button>
            <button aria-label="Reading"><svg viewBox="0 0 10 10"><path d="M5 2L1 1v7l4 1 4-1V1zv7" fill="#fff" stroke="#000"/></svg></button>
            <button class="raised" aria-label="Scroll left"><svg viewBox="0 0 10 10"><path d="M7 1v8L3 5z"/></svg></button>
            <div class="hthumb"></div>
        </div>
        <footer class="status">
            <div class="cell pos"><span>1 页</span><span>1 节</span><span>1/1</span></div>
            <div class="cell loc"><span>位置 1.3厘米</span><span class="push">1 行</span><span>1 列</span></div>
            <div class="cell dim">录制</div>
            <div class="cell dim">修订</div>
            <div class="cell dim">扩展</div>
            <div class="cell dim">改写</div>
            <div class="cell lang">中文(中国)</div>
            <div class="cell wide"></div>
            <div class="cell wide"></div>
            <div class="cell dim"></div>
            <div class="cell dim"></div>
        </footer>
    </section>
    <div class="mark mark-doc"></div>
</body>
</html>
```
FILE: styles.css
```
* {
    box-sizing: border-box;
}
body {
    margin: 0;
    height: 100vh;
    display: flex;
    flex-direction: column;
    position: relative;
    overflow: hidden;
    background: #000;
    color: #000;
    font: 12px "Liberation Serif", "Noto Sans CJK SC", serif;
}
button, input, select {
    margin: 0;
    padding: 0;
    border: 0;
    border-radius: 0;
    background: none;
    color: inherit;
    font: inherit;
}
i {
    display: block;
    flex: none;
}
svg {
    flex: none;
}
s {
    color: #888;
    text-decoration: none;
    font-weight: normal;
    font-size: 12px;
}
.sheet {
    display: none;
}
symbol .sans {
    font-family: "Liberation Sans", sans-serif;
}

/* graphic editor */
.ge-title {
    flex: none;
    display: flex;
    align-items: center;
    gap: 2px;
    height: 20px;
    padding-left: 2px;
    background: linear-gradient(90deg, #808080, #b4b4b4);
    border-bottom: 1px solid #e4e0d8;
    color: #dcd8d0;
    font: bold 12px "Liberation Mono", monospace;
}
.ge-title svg {
    width: 16px;
    height: 16px;
}
.ge-menu {
    flex: none;
    display: flex;
    align-items: center;
    gap: 18px;
    height: 55px;
    padding: 0 14px 4px;
    background: #9cdbdb;
    border: 2px solid #d4f6f6;
    border-bottom: 0;
    box-shadow: inset 0 -2px #d4f6f6, inset 0 -4px #5a8c8c;
    font: bold 14px "Liberation Serif", serif;
}
.ge-menu u {
    text-underline-offset: 3px;
}
.ge-main {
    flex: 1;
    display: flex;
    min-height: 0;
    padding-bottom: 1px;
}
.side {
    flex: none;
    display: flex;
    flex-direction: column;
    width: 155px;
    margin: 1px 0;
    padding: 2px 2px 2px 3px;
    background: #55cdb0;
    font: 15px "Liberation Mono", monospace;
}
.info {
    height: 19px;
    padding-left: 1px;
    border: 1px solid #000;
    background: #9cdbdb;
    line-height: 18px;
    white-space: nowrap;
}
.matrix {
    margin-top: 2px;
    padding: 2px;
    height: 27px;
    border: 1px solid #000;
}
.matrix button {
    width: 100%;
    height: 21px;
    padding-left: 1px;
    border: 2px solid;
    border-color: #d4f6f6 #5a8c8c #5a8c8c #d4f6f6;
    background: #9cdbdb;
    text-align: left;
    line-height: 17px;
}
.lists {
    flex: 1;
    display: flex;
    min-height: 0;
    margin: 5px 0 5px;
    border-top: 2px solid #2a7560;
    border-left: 2px solid #2f6656;
    border-bottom: 2px solid #a5eedb;
}
.layers {
    display: flex;
    flex-direction: column;
    gap: 3px;
    width: 122px;
    padding: 0 2px 0 1px;
    margin-bottom: 1px;
    border: 1px solid #000;
    border-top-width: 0;
}
.group {
    padding: 2px 2px 0;
    background: #000;
}
.layer {
    display: flex;
    gap: 2px;
    height: 14px;
    margin-bottom: 2px;
    font: bold 12px "Liberation Mono", monospace;
}
.layer input {
    appearance: none;
    flex: none;
    width: 14px;
    height: 14px;
    border: 2px solid #fff;
    background: #fff;
    box-shadow: inset 0 0 0 2px #000;
}
.layer .work {
    border-color: #0a0a90;
    box-shadow: inset 0 0 0 2px #0a0a90;
}
.layer i {
    width: 14px;
}
.layer .red {
    background: #f00;
}
.layer .green {
    background: #449a00;
}
.layer b {
    flex: 1;
    display: flex;
    align-items: center;
    gap: 3px;
    padding: 0 3px 0 1px;
    background: #9cdbdb;
    line-height: 14px;
}
.layer svg {
    width: 8px;
    height: 7px;
}
.layer svg:first-of-type {
    margin-left: auto;
}
.layer .signal {
    background: #ffc850;
}
.layer .mask {
    background: #00a57c;
}
.layer .active {
    background: #fff;
}
.layer .drill {
    background: #9cb3be;
}
.layer .rout {
    background: #dadada;
}
.bevel {
    flex: 1;
    margin-left: 1px;
    border-left: 2px solid #a5eedb;
    border-right: 2px solid #a5eedb;
    margin-right: 4px;
}
.vbar {
    display: flex;
    flex-direction: column;
    width: 15px;
    border-left: 2px solid #1f6e58;
    border-right: 2px solid #a5eedb;
    background: #44ad90;
}
.vbar button {
    height: 12px;
    line-height: 0;
}
.vbar svg {
    width: 11px;
    height: 12px;
}
.thumb {
    flex: 1;
    margin-top: 126px;
    background: #55cdb0;
    border-top: 1px solid #b5fbe8;
    border-right: 2px solid #1f6e58;
    border-bottom: 1px solid #1f6e58;
}
.selected {
    height: 19px;
    padding-left: 2px;
    border: 1px solid #000;
    background: #ffc850;
    font: bold 12px "Liberation Mono", monospace;
    line-height: 17px;
}
.board {
    flex: 1;
    position: relative;
    overflow: hidden;
}
.art {
    display: block;
    width: 1445px;
    height: 720px;
}
.pb, .fp {
    fill: #f00;
    stroke: #f00;
    stroke-linejoin: round;
}
.pb {
    font-size: 48px;
    stroke-width: 3px;
}
.fp {
    font: 50px "Liberation Mono", monospace;
    stroke-width: 4px;
}
.ge-foot {
    flex: none;
    display: flex;
    align-items: stretch;
    height: 32px;
    padding-left: 1px;
    background: #fffdcc;
    border-bottom: 1px solid #000;
    font: bold 12px "Liberation Mono", monospace;
}
.ge-foot label {
    width: 47px;
    padding-left: 1px;
    line-height: 31px;
    white-space: nowrap;
}
.tool {
    display: flex;
    align-items: center;
    justify-content: center;
    flex: none;
    width: 32px;
    border: 1px solid #000;
    box-shadow: inset 0 0 0 2px #fffdcc, inset 4px 4px #e4dcb0, inset -4px -4px #9c9670;
}
.tool svg {
    width: 20px;
    height: 18px;
}
.tool.on {
    border: 2px solid #55b89c;
    box-shadow: inset 2px 2px #c4bc90, inset -2px -2px #e4dcb0;
}
.bang {
    width: 34px;
    border: 0 solid #55cdb0;
    border-width: 2px 3px 2px 4px;
    box-shadow: inset 2px 2px #e4dcb0, inset -2px -2px #9c9670;
}
.bang span {
    width: 18px;
    border: 1px solid #000;
    font-size: 14px;
    line-height: 18px;
}
.xy {
    width: 172px;
    padding: 2px;
    border-left: 1px solid #55b89c;
}
.xy input {
    width: 100%;
    height: 100%;
    padding: 0 3px 4px;
    border: 2px solid;
    border-color: #6c684c #e4dcb0 #a8a078 #000;
    background: #fffdcc;
    font-size: 18px;
    font-weight: normal;
}
.prompt {
    flex: 1;
    padding-left: 1px;
    border-left: 1px solid #000;
    line-height: 30px;
}
.units {
    display: flex;
    align-items: center;
    justify-content: space-between;
    flex: none;
    width: 81px;
    padding: 0 10px;
    border: 2px solid #1f6e58;
    background: #55cdb0;
    box-shadow: inset 2px 2px #a5eedb, inset -2px -2px #2f8068;
    font-size: 15px;
}
.units i {
    width: 12px;
    height: 6px;
    border: 1px solid;
    border-color: #c5fff0 #1f6e58 #1f6e58 #c5fff0;
}
.ge-cmd {
    flex: none;
    height: 36px;
    padding: 3px 2px 1px;
    background: #5a8c8c;
    border-bottom: 4px solid #b8b4ac;
}
.ge-cmd div {
    height: 27px;
    border: 1px solid #000;
    background: #b0ffff;
    box-shadow: inset 2px 4px #d4ffff, inset 0 -2px #b0ffff, inset 0 -4px #5a8c8c;
}

/* annotations */
.note {
    position: absolute;
    left: 271px;
    top: 172px;
    width: 431px;
    height: 82px;
    padding: 4px 5px;
    border: 3px solid #e01010;
    background: #fff;
    box-shadow: 2px 2px 3px #444;
    font: bold 17px/16px "Liberation Sans", "Noto Sans CJK SC", sans-serif;
}
.mark {
    position: absolute;
    border: 4px solid #1ee81e;
    box-shadow: 2px 3px 4px #888, inset 2px 3px 4px #aaa;
}
.mark-cells {
    left: 1024px;
    top: 202px;
    width: 166px;
    height: 82px;
}
.mark-doc {
    left: 835px;
    right: 0;
    top: 558px;
    height: 120px;
}

/* office windows */
.win {
    position: absolute;
    right: 0;
    display: flex;
    flex-direction: column;
    overflow: hidden;
    padding: 2px 0 0 3px;
    background: #d4d0c8;
    border: 1px solid #fff;
    border-right: 0;
    border-bottom: 2px solid #555;
    white-space: nowrap;
}
.excel {
    left: 877px;
    top: 1px;
    bottom: 76px;
    padding-left: 4px;
}
.word {
    left: 758px;
    top: 330px;
    bottom: 109px;
}
.win svg {
    width: 16px;
    height: 16px;
}
.title {
    flex: none;
    display: flex;
    align-items: center;
    gap: 2px;
    height: 19px;
    padding-left: 2px;
    font: bold 12px "Liberation Mono", "Noto Sans CJK SC", monospace;
}
.excel .title {
    background: linear-gradient(90deg, #808080, #a8a8a8);
    color: #dcd8d0;
}
.word .title {
    height: 20px;
    background: linear-gradient(90deg, #0a246a, #a6caf0);
    color: #fff;
}
.wbtns {
    display: flex;
    gap: 1px;
    margin: 0 -10px 0 auto;
}
.wbtns button {
    width: 15px;
    height: 14px;
    padding: 2px 3px;
    background: #d4d0c8;
    border: 1px solid;
    border-color: #fff #404040 #404040 #fff;
}
.min {
    width: 6px;
    height: 8px;
    border-bottom: 2px solid #000;
}
.max {
    width: 9px;
    height: 8px;
    border: 1px solid #000;
    border-top-width: 2px;
}
.row, .menu {
    flex: none;
    display: flex;
    align-items: center;
    gap: 3px;
    height: 25px;
    background: linear-gradient(90deg, #d6d3cb, #f4f3f1);
}
.bar {
    display: flex;
    align-items: center;
    height: 24px;
    padding-left: 3px;
    border-radius: 4px;
    background: linear-gradient(#f8f7f5, #e9e7e2 60%, #cfccc4);
}
.word .bar {
    padding-left: 4px;
}
.rest {
    flex: 1;
}
.grip {
    width: 3px;
    height: 16px;
    margin-right: 1px;
    background: repeating-linear-gradient(#999 0 2px, #f4f3f1 2px 4px);
}
.tb {
    display: flex;
    align-items: center;
    justify-content: center;
    flex: none;
    width: 23px;
    height: 22px;
}
.blue {
    color: #2b5cb4;
}
.gray {
    color: #aaa;
}
.big {
    font-size: 16px;
}
.pressed {
    border: 1px solid #0a246a;
    background: #d6d9e4;
}
.fmt {
    font-size: 14px;
}
.fmt b {
    font-weight: bold;
    -webkit-text-stroke: 1px #000;
}
.fmt em, .fmt u {
    font-weight: bold;
}
.sep {
    width: 2px;
    height: 16px;
    margin: 0 2px;
    background: #a6a398;
    border-right: 1px solid #fff;
}
.arr {
    width: 11px;
    height: 3px;
    background: #000;
    clip-path: polygon(3px 0, 8px 0, 5px 3px);
}
.off {
    background: #999;
}
.win select {
    appearance: none;
    height: 17px;
    margin: 0 2px;
    padding-left: 3px;
    background: #fff url("data:image/svg+xml,%3Csvg xmlns='http://www.w3.org/2000/svg' width='11' height='15'%3E%3Cpath fill='%23d9d6cf' d='M0 0h11v15H0z'/%3E%3Cpath d='M3 6h5L5.500 9z'/%3E%3C/svg%3E") no-repeat right 1px center;
    line-height: 17px;
}
.win .zoom {
    width: 68px;
    margin: 0 1px;
}
.win .small {
    width: 60px;
}
.win .face {
    flex: 1;
    margin-right: -14px;
}
.win .style {
    width: 79px;
}
.win .font {
    width: 124px;
}
.win .size {
    width: 50px;
}
.more {
    display: flex;
    align-items: flex-end;
    justify-content: center;
    width: 11px;
    height: 24px;
    margin-left: 2px;
    padding-bottom: 2px;
    border-radius: 0 4px 4px 0;
    background: linear-gradient(#a8a8a8, #787878);
}
.win .more svg {
    width: 8px;
    height: 8px;
}
.read {
    display: flex;
    align-items: center;
    gap: 2px;
    width: 67px;
    padding-left: 3px;
}
.menu {
    gap: 16px;
    height: 24px;
    padding-left: 3px;
}
.word .menu {
    height: 25px;
}
.menu .grip {
    margin-right: -10px;
}
.menu .icon {
    margin-right: -11px;
}
.menu button {
    min-width: 42px;
    text-align: left;
}
.word .menu .grip {
    margin-right: -5px;
}

/* worksheet */
.formula {
    flex: none;
    display: flex;
    align-items: center;
    height: 19px;
    font-size: 16px;
}
.formula input {
    height: 19px;
    background: #fff;
}
.namebox {
    width: 106px;
    text-align: center;
}
.formula .arr {
    width: 16px;
    height: 4px;
    clip-path: polygon(5px 0, 12px 0, 8px 4px);
}
.formula em {
    width: 64px;
    padding-right: 4px;
    text-align: right;
    font-weight: bold;
    font-size: 14px;
}
.fx {
    flex: 1;
    padding-left: 11px;
}
.cells {
    flex: 1;
    min-height: 0;
    overflow: hidden;
    margin-top: 1px;
    border-top: 2px solid #555;
    background: #fff;
}
.cells table {
    width: 100%;
    table-layout: fixed;
    border-collapse: separate;
    border-spacing: 0;
    font-size: 16px;
    line-height: 18px;
}
.cells th {
    height: 19px;
    padding: 0;
    background: #d4d0c8;
    border-right: 1px solid #808080;
    border-bottom: 1px solid #808080;
    font-weight: normal;
}
.cells thead th {
    height: 20px;
}
.cells th:nth-child(1) {
    width: 35px;
}
.cells th:nth-child(2) {
    width: 149px;
}
.cells td {
    height: 19px;
    padding: 0 2px;
    border-bottom: 1px solid #000;
}
.cells td:nth-child(2) {
    border-right: 2px solid #000;
}
.tabs {
    flex: none;
    display: flex;
    align-items: flex-end;
    height: 20px;
    border-bottom: 1px solid #fff;
    background: #d4d0c8;
}
.tabs > svg {
    width: 60px;
    height: 10px;
    margin: 0 4px 2px 2px;
}
.tabs a {
    width: 52px;
    background: #fff;
    border-bottom: 1px solid #000;
    clip-path: polygon(0 0, 100% 0, 88% 100%, 12% 100%);
    color: #000;
    text-align: center;
    line-height: 16px;
}
.tabscroll {
    display: flex;
    width: 72px;
    margin-left: auto;
    padding-left: 5px;
}
.tabscroll button {
    width: 12px;
    height: 18px;
    border: 1px solid;
    border-color: #fff #555 #555 #fff;
}
.tabscroll svg {
    width: 8px;
    height: 8px;
}
.tabscroll i {
    flex: 1;
    border: 1px solid;
    border-color: #fff #555 #555 #fff;
}
.ready {
    flex: none;
    display: flex;
    justify-content: space-between;
    height: 22px;
    padding: 4px 0 3px 9px;
    line-height: 15px;
}
.ready i {
    width: 26px;
    border: 1px solid #e6e3dc;
}

/* document */
.hruler {
    flex: none;
    display: flex;
    height: 26px;
    padding: 4px 4px 0 5px;
    border-top: 2px solid #555;
    font: 11px "Liberation Sans", sans-serif;
}
.tabstop {
    width: 16px;
    height: 16px;
    margin-right: 21px;
    border: 1px solid #888;
    line-height: 0;
}
.win .tabstop svg {
    width: 8px;
    height: 8px;
}
.scale {
    flex: 1;
    display: flex;
    height: 18px;
    background: repeating-linear-gradient(90deg, transparent 0 46px, #888 46px 47px, transparent 47px 48px) 0 14px / auto 3px no-repeat;
}
.scale .edge {
    width: 46px;
    height: 12px;
    padding-left: 16px;
    background: #808080;
    line-height: 12px;
}
.scale .tail {
    flex: 1;
    padding-left: 25px;
}
.white {
    position: relative;
    display: flex;
    width: 696px;
    height: 12px;
    padding-left: 15px;
    background: #fff;
    line-height: 12px;
}
.white span {
    width: 28px;
    text-align: center;
}
.white .ind {
    position: absolute;
    left: -5px;
    top: -3px;
    width: 10px;
    height: 21px;
}
.white .end {
    left: auto;
    right: -5px;
    top: -6px;
}
.docarea {
    flex: 1;
    display: flex;
    min-height: 0;
    border-left: 1px solid #555;
    background: #808080;
}
.vruler {
    flex: none;
    width: 25px;
    padding: 17px 4px 0 7px;
    background: #d4d0c8;
    font: 11px "Liberation Sans", sans-serif;
    overflow: hidden;
}
.vruler div {
    background: #fff linear-gradient(#000 1px, transparent 1px) repeat-y 5px 10px / 5px 21px;
}
.vruler .vtop {
    height: 50px;
    margin-bottom: 2px;
    background-color: #808080;
    background-position: 5px 18px;
}
.vruler span {
    display: flex;
    align-items: center;
    justify-content: center;
    width: 14px;
    height: 14px;
    margin-bottom: 28px;
    transform: rotate(-90deg);
}
.vmain {
    height: 175px;
    padding-top: 32px;
}
.page {
    flex: 1;
    margin: 15px 2px 0 15px;
    border: 1px solid #000;
    border-bottom: 0;
    background: #fff;
    padding-left: 46px;
    font-size: 14px;
    overflow: hidden;
}
.corners {
    display: flex;
    justify-content: space-between;
    margin: 0 26px 0 -23px;
    padding-top: 28px;
}
.corners i {
    width: 24px;
    height: 24px;
    border: 1px solid #999;
    border-width: 0 1px 1px 0;
}
.corners i:last-child {
    border-width: 0 0 1px 1px;
}
.page h2 {
    margin: 0;
    font-size: 16px;
    line-height: 21px;
}
.page h2 span {
    display: inline-block;
    background: #f00;
}
.page h3 {
    margin: 0 0 7px;
    padding-left: 28px;
    font-size: 14px;
    line-height: 20px;
}
.page p {
    margin: 0;
    padding-left: 64px;
    line-height: 30px;
}
.page .code {
    margin: 0 28px 0 15px;
    font-size: 20px;
    line-height: 20px;
}
.page h3.tight {
    margin: 0 0 4px;
    line-height: 14px;
}
.page table {
    margin-left: 77px;
    border-collapse: collapse;
    line-height: 19px;
}
.page th {
    padding: 0 14px;
    text-align: left;
    font-weight: normal;
}
.page th + th {
    padding: 0 4px;
}
.page td {
    width: 130px;
    padding: 0;
    font-family: Lato, sans-serif;
    font-size: 13px;
}
.views {
    flex: none;
    display: flex;
    height: 17px;
    padding-left: 1px;
}
.views button {
    display: flex;
    align-items: center;
    justify-content: center;
    width: 16px;
}
.views svg {
    width: 10px;
    height: 10px;
}
.views .raised, .hthumb {
    border: 1px solid;
    border-color: #fff #666 #666 #fff;
}
.hthumb {
    flex: 1;
    margin: 0 7px 0 4px;
}
.status {
    flex: none;
    display: flex;
    gap: 4px;
    height: 23px;
    padding: 3px 0 3px 4px;
    border-top: 1px solid #fff;
}
.cell {
    display: flex;
    height: 17px;
    padding: 0 2px;
    border: 1px solid #e0ddd6;
    line-height: 15px;
}
.dim {
    width: 30px;
    color: #999;
}
.pos {
    width: 198px;
    justify-content: flex-end;
    gap: 28px;
    padding-right: 22px;
}
.pos span:first-child {
    margin-right: 12px;
}
.loc {
    width: 226px;
    gap: 22px;
}
.push {
    margin-left: auto;
}
.lang {
    width: 66px;
}
.wide {
    width: 45px;
}
```
